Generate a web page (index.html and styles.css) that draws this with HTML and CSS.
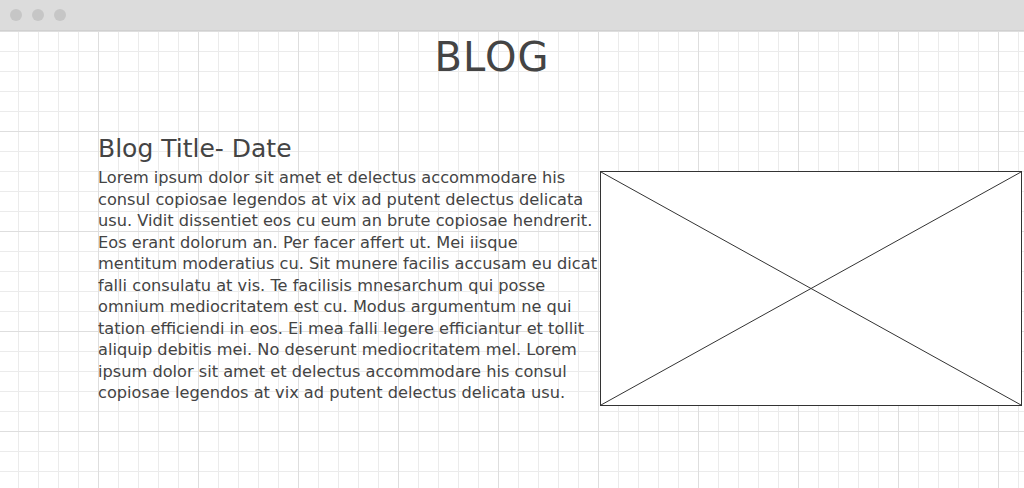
FILE: index.html
```html
<!DOCTYPE html>
<html lang="en">
<head>
<meta charset="utf-8">
<title>Blog</title>
<link rel="stylesheet" href="styles.css">
</head>
<body>
<div class="window-bar">
  <span class="dot"></span><span class="dot"></span><span class="dot"></span>
</div>
<main class="canvas">
  <h1 class="page-title">BLOG</h1>
  <article class="post">
    <div class="post-text">
      <h2 class="post-title">Blog Title- Date</h2>
      <p class="post-body">Lorem ipsum dolor sit amet et delectus accommodare his consul copiosae legendos at vix ad putent delectus delicata usu. Vidit dissentiet eos cu eum an brute copiosae hendrerit. Eos erant dolorum an. Per facer affert ut. Mei iisque mentitum moderatius cu. Sit munere facilis accusam eu dicat falli consulatu at vis. Te facilisis mnesarchum qui posse omnium mediocritatem est cu. Modus argumentum ne qui tation efficiendi in eos. Ei mea falli legere efficiantur et tollit aliquip debitis mei. No deserunt mediocritatem mel. Lorem ipsum dolor sit amet et delectus accommodare his consul copiosae legendos at vix ad putent delectus delicata usu.</p>
    </div>
    <div class="post-image">
      <svg viewBox="0 0 100 100" preserveAspectRatio="none" aria-hidden="true">
        <line x1="0" y1="0" x2="100" y2="100" />
        <line x1="100" y1="0" x2="0" y2="100" />
      </svg>
    </div>
  </article>
</main>
</body>
</html>
```

FILE: styles.css
```css
html, body {
  margin: 0;
  padding: 0;
}

body {
  width: 1024px;
  height: 488px;
  overflow: hidden;
  font-family: "DejaVu Sans", "Liberation Sans", sans-serif;
  color: #444;
  background: #fff;
}

.window-bar {
  height: 30px;
  border-bottom: 1px solid #d0d0d0;
  background: #dcdcdc;
  display: flex;
  align-items: center;
  gap: 10px;
  padding-left: 10px;
}

.dot {
  width: 12px;
  height: 12px;
  border-radius: 50%;
  background: #c6c6c6;
}

.canvas {
  height: 457px;
  background-color: #fff;
  background-image:
    linear-gradient(to right, #dedede 1px, transparent 1px),
    linear-gradient(to bottom, #dedede 1px, transparent 1px),
    linear-gradient(to right, #ebebeb 1px, transparent 1px),
    linear-gradient(to bottom, #ebebeb 1px, transparent 1px);
  background-size: 100px 100px, 100px 100px, 20px 20px, 20px 20px;
  background-position: 98px 0, 0 0, 18px 0, 0 0;
  overflow: hidden;
}

.page-title {
  margin: 0;
  padding: 3px 40px 0 0;
  text-align: center;
  font-size: 40px;
  font-weight: normal;
  line-height: 46px;
  letter-spacing: 1px;
  color: #444;
}

.post {
  display: flex;
  align-items: flex-start;
  padding: 55px 0 0 98px;
}

.post-text {
  width: 502px;
}

.post-title {
  margin: 0 0 4px;
  font-size: 25px;
  font-weight: normal;
  line-height: 28px;
  color: #444;
}

.post-body {
  margin: 0;
  font-size: 16.2px;
  line-height: 21.5px;
  color: #444;
}

.post-image {
  width: 420px;
  height: 233px;
  margin-top: 36px;
  border: 1px solid #333;
  background: #fff;
}

.post-image svg {
  display: block;
  width: 100%;
  height: 100%;
}

.post-image line {
  stroke: #333;
  stroke-width: 1;
  vector-effect: non-scaling-stroke;
}
```
